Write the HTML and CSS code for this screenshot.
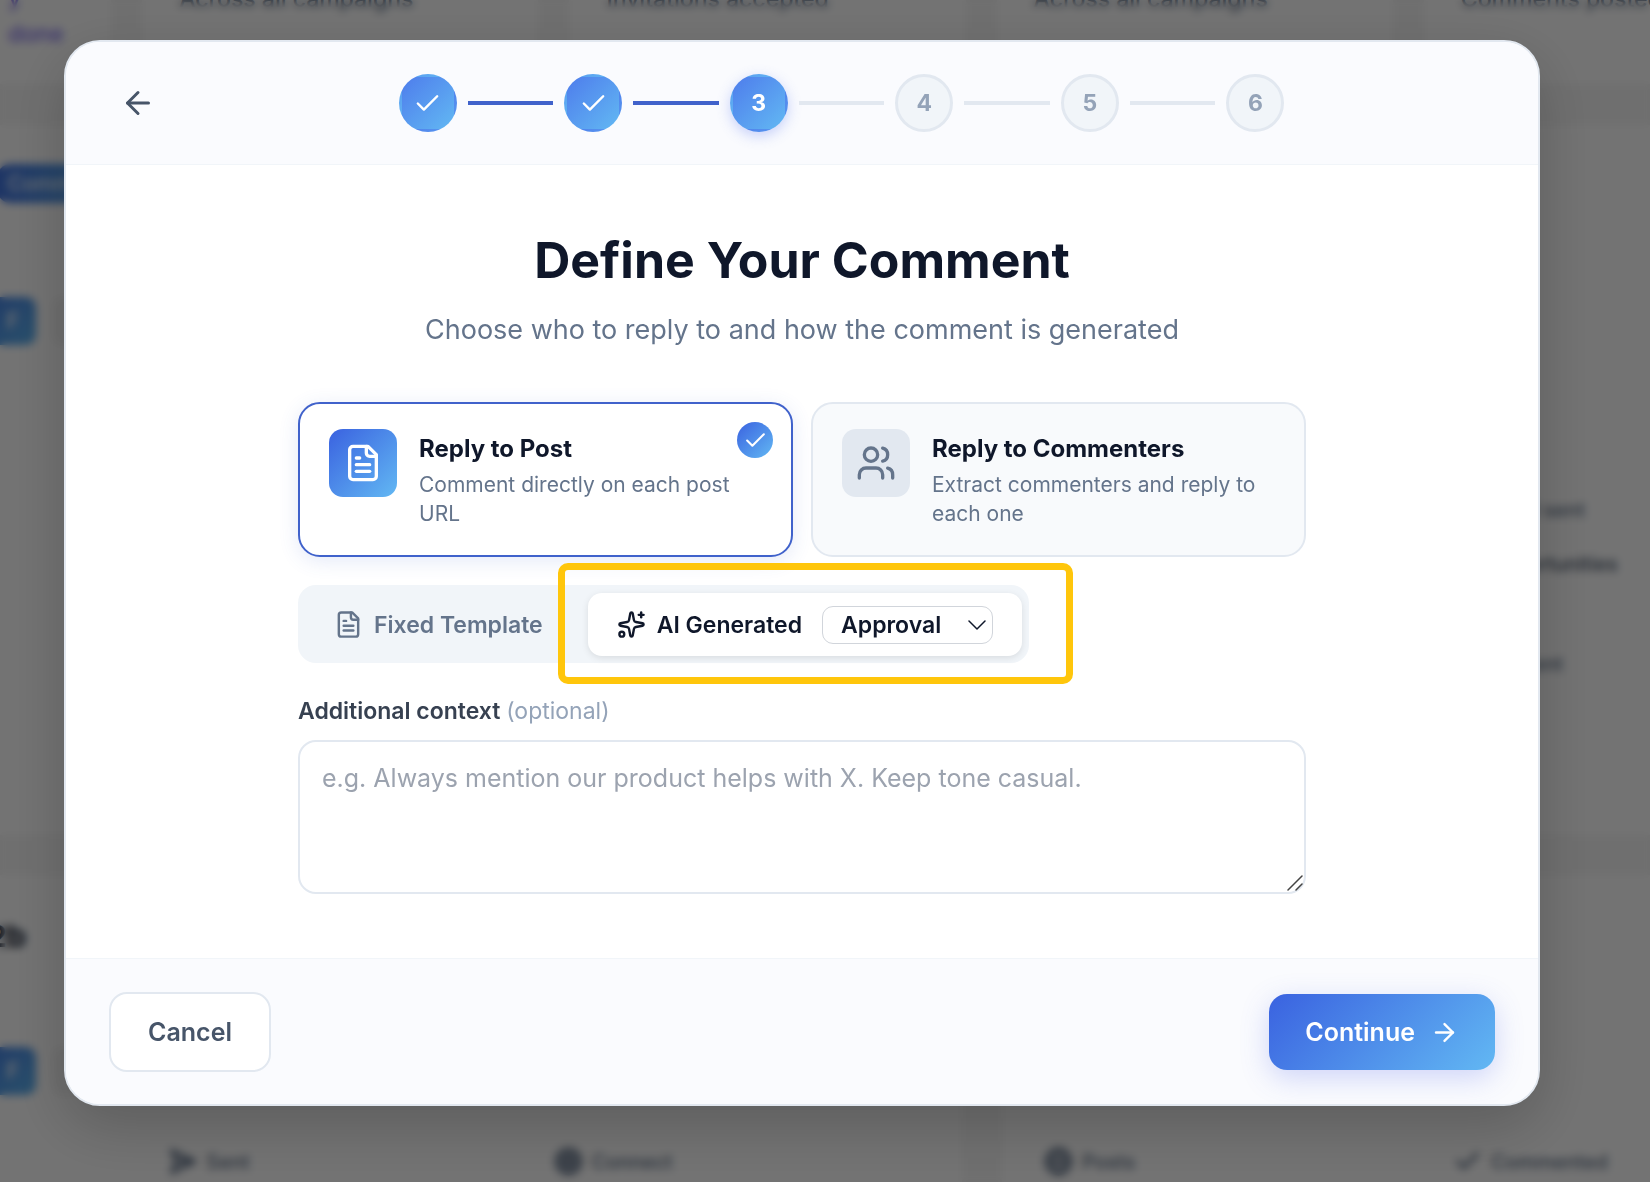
FILE: index.html
```html
<!DOCTYPE html>
<html lang="en">
<head>
    <meta charset="UTF-8">
    <meta name="viewport" content="width=device-width, initial-scale=1.0">
    <title>New Campaign - Define Your Comment</title>
    <link rel="stylesheet" href="styles.css">
</head>
<body>

<!-- Dashboard behind the dialog -->
<div class="dashboard" aria-hidden="true">
    <div class="stats">
        <div class="panel stat stat-done">y<br>done</div>
        <div class="panel stat">Across all campaigns</div>
        <div class="panel stat">Invitations accepted</div>
        <div class="panel stat">Across all campaigns</div>
        <div class="panel stat">Comments posted</div>
    </div>
    <div class="campaigns">
        <div class="panel campaign">
            <span class="pill">Comment</span>
            <div class="avatars"><span class="avatar">F</span><span class="avatar avatar-empty"></span></div>
        </div>
        <div class="panel activity">
            <p>Email sent</p>
            <p class="strong">Opportunities</p>
            <p class="last">Content</p>
        </div>
        <div class="panel campaign">
            <h2>2b</h2>
            <div class="avatars avatars-low"><span class="avatar">F</span><span class="avatar avatar-empty"></span></div>
            <div class="metrics metrics-left">
                <span class="metric"><svg class="icon-md" viewBox="0 0 24 24"><path d="M3 3l4 9-4 9 19-9zM7 12h15"/></svg>Sent</span>
                <span class="metric"><svg class="icon-md" viewBox="0 0 24 24"><circle cx="12" cy="12" r="10"/><circle cx="12" cy="12" r="6"/><circle cx="12" cy="12" r="2"/></svg>Connect</span>
            </div>
        </div>
        <div class="panel campaign">
            <div class="metrics metrics-right">
                <span class="metric"><svg class="icon-md" viewBox="0 0 24 24"><circle cx="12" cy="12" r="10"/><ellipse cx="12" cy="12" rx="4" ry="10"/><path d="M2 12h20"/></svg>Posts</span>
                <span class="metric"><svg class="icon-md" viewBox="0 0 24 24"><path d="M20 6 9 17l-5-5"/></svg>Commented</span>
            </div>
        </div>
    </div>
</div>

<div class="overlay">
    <div class="modal" role="dialog" aria-labelledby="modalTitle">

        <header class="modal-header">
            <button class="back-button" aria-label="Back">
                <svg class="icon-lg" viewBox="0 0 24 24"><path d="m12 19-7-7 7-7"/><path d="M19 12H5"/></svg>
            </button>
            <div class="steps-area">
                <div class="steps">
                    <span class="step done"><svg class="icon-md" viewBox="0 0 24 24"><path d="M20 6 9 17l-5-5"/></svg></span>
                    <span class="step-line done"></span>
                    <span class="step done"><svg class="icon-md" viewBox="0 0 24 24"><path d="M20 6 9 17l-5-5"/></svg></span>
                    <span class="step-line done"></span>
                    <span class="step done current">3</span>
                    <span class="step-line"></span>
                    <span class="step">4</span>
                    <span class="step-line"></span>
                    <span class="step">5</span>
                    <span class="step-line"></span>
                    <span class="step">6</span>
                </div>
            </div>
        </header>

        <main class="modal-body">
            <h1 id="modalTitle">Define Your Comment</h1>
            <p class="subtitle">Choose who to reply to and how the comment is generated</p>

            <div class="options">
                <button class="option selected">
                    <span class="option-icon">
                        <svg class="icon-xl" viewBox="0 0 24 24"><path d="M15 2H6a2 2 0 0 0-2 2v16a2 2 0 0 0 2 2h12a2 2 0 0 0 2-2V7Z"/><path d="M14 2v4a2 2 0 0 0 2 2h4"/><path d="M10 9H8"/><path d="M16 13H8"/><path d="M16 17H8"/></svg>
                    </span>
                    <span class="option-text">
                        <span class="option-title">Reply to Post</span>
                        <span class="option-desc">Comment directly on each post URL</span>
                    </span>
                    <span class="option-check">
                        <svg class="icon-sm" viewBox="0 0 24 24"><path d="M20 6 9 17l-5-5"/></svg>
                    </span>
                </button>
                <button class="option">
                    <span class="option-icon">
                        <svg class="icon-xl" viewBox="0 0 24 24"><path d="M16 21v-2a4 4 0 0 0-4-4H6a4 4 0 0 0-4 4v2"/><circle cx="9" cy="7" r="4"/><path d="M22 21v-2a4 4 0 0 0-3-3.87"/><path d="M16 3.13a4 4 0 0 1 0 7.75"/></svg>
                    </span>
                    <span class="option-text">
                        <span class="option-title">Reply to Commenters</span>
                        <span class="option-desc">Extract commenters and reply to each one</span>
                    </span>
                </button>
            </div>

            <div class="tabs">
                <button class="tab">
                    <svg class="icon-md" viewBox="0 0 24 24"><path d="M15 2H6a2 2 0 0 0-2 2v16a2 2 0 0 0 2 2h12a2 2 0 0 0 2-2V7Z"/><path d="M14 2v4a2 2 0 0 0 2 2h4"/><path d="M10 9H8"/><path d="M16 13H8"/><path d="M16 17H8"/></svg>
                    Fixed Template
                </button>
                <div class="tab-active">
                    <button class="tab">
                        <svg class="icon-md" viewBox="0 0 24 24"><path d="M11.017 2.814a1 1 0 0 1 1.966 0l1.051 5.558a2 2 0 0 0 1.594 1.594l5.558 1.051a1 1 0 0 1 0 1.966l-5.558 1.051a2 2 0 0 0-1.594 1.594l-1.051 5.558a1 1 0 0 1-1.966 0l-1.051-5.558a2 2 0 0 0-1.594-1.594l-5.558-1.051a1 1 0 0 1 0-1.966l5.558-1.051a2 2 0 0 0 1.594-1.594z"/><path d="M20 2v4"/><path d="M22 4h-4"/><circle cx="4" cy="20" r="2"/></svg>
                        AI Generated
                    </button>
                    <div class="mode">
                        <select aria-label="Generation mode">
                            <option>Approval</option>
                            <option>Auto</option>
                        </select>
                        <svg class="chevron" viewBox="0 0 18 10"><path d="M1 1l8 8 8-8"/></svg>
                    </div>
                </div>
                <div class="highlight"></div>
            </div>

            <label for="context">Additional context <span>(optional)</span></label>
            <div class="context-box">
                <textarea id="context" placeholder="e.g. Always mention our product helps with X. Keep tone casual."></textarea>
                <svg class="resizer" viewBox="0 0 16 16"><path d="M1 15 15 1M9 15l6-6"/></svg>
            </div>
        </main>

        <footer class="modal-footer">
            <button class="cancel-button">Cancel</button>
            <button class="continue-button">
                Continue
                <svg class="icon-md" viewBox="0 0 24 24"><path d="M5 12h14"/><path d="m12 5 7 7-7 7"/></svg>
            </button>
        </footer>
    </div>
</div>

</body>
</html>
```

FILE: styles.css
```css
* {
    box-sizing: border-box;
}
body {
    font-family: Inter, "Liberation Sans", sans-serif;
    background-color: #f7f7f7;
    color: #0f172a;
    margin: 0;
    height: 100vh;
    overflow: hidden;
}
h1, h2, p {
    margin: 0;
}
button, select, textarea {
    font-family: inherit;
    margin: 0;
}
button {
    background: none;
    border: none;
    padding: 0;
    cursor: pointer;
}
svg {
    fill: none;
    stroke: currentColor;
    stroke-width: 2;
    stroke-linecap: round;
    stroke-linejoin: round;
    flex-shrink: 0;
}
.icon-sm {
    width: 25px;
    height: 25px;
}
.icon-md {
    width: 29px;
    height: 29px;
}
.icon-lg {
    width: 36px;
    height: 36px;
}
.icon-xl {
    width: 40px;
    height: 40px;
}

/* Dashboard */
.dashboard {
    margin: -20px -170px 0 -285px;
    color: #64748b;
    font-size: 23px;
    font-weight: 500;
}
.stats {
    display: grid;
    grid-template-columns: repeat(5, 1fr);
    gap: 31px;
    margin-bottom: 41px;
}
.panel {
    background-color: white;
}
.stat {
    height: 104px;
    padding: 4px 37px;
    line-height: 30px;
}
.stat-done {
    color: #7c6cf0;
    padding: 0 0 0 293px;
    line-height: 36px;
}
.campaigns {
    display: grid;
    grid-template-columns: 1247fr 818fr;
    grid-template-rows: 710px 400px;
    gap: 40px;
}
.campaign {
    padding-left: 248px;
}
.pill {
    display: inline-block;
    margin: 39px 0 94px 34px;
    padding: 0 10px;
    border-radius: 14px;
    background: linear-gradient(90deg, #4274e0, #5eb4f0);
    color: #eff6ff;
    font-size: 21px;
    line-height: 39px;
}
.avatars {
    display: flex;
    gap: 16px;
}
.avatars-low {
    margin-top: 90px;
}
.avatar {
    width: 73px;
    height: 48px;
    padding-left: 43px;
    border-radius: 10px;
    background: linear-gradient(135deg, #4274e0, #5eb4f0);
    color: #eff6ff;
    line-height: 48px;
}
.avatar-empty {
    background: #f5f5f5;
}
.campaign h2 {
    padding: 40px 0 0 25px;
    color: #0f172a;
    font-size: 30px;
    line-height: 42px;
}
.activity {
    padding: 370px 0 0 485px;
    color: #64748b;
    font-size: 20px;
    line-height: 30px;
}
.activity .strong {
    margin-top: 24px;
    color: #475569;
}
.activity .last {
    margin-top: 70px;
}
.metrics {
    display: flex;
    gap: 304px;
    font-size: 20px;
}
.metrics-left {
    margin: 52px 0 0 205px;
}
.metrics-right {
    margin: 272px 0 0 -206px;
    gap: 318px;
}
.metric {
    display: flex;
    align-items: center;
    gap: 9px;
}
.metric svg {
    stroke-width: 3;
}

/* Modal */
.overlay {
    position: fixed;
    inset: 0;
    overflow: hidden;
    padding: 40px 110px 76px 64px;
    background-color: rgba(0, 0, 0, 0.55);
    backdrop-filter: blur(4px);
}
.modal {
    display: flex;
    flex-direction: column;
    background-color: white;
    border: 2px solid #e2e8f0;
    border-radius: 36px;
    box-shadow: 0 20px 60px rgba(0, 0, 0, 0.2);
    overflow: hidden;
}
.modal-header {
    display: flex;
    align-items: center;
    gap: 21px;
    padding: 32px 43px;
    background-color: #fafbfe;
    border-bottom: 1px solid #f1f5f9;
}
.back-button {
    display: flex;
    align-items: center;
    justify-content: center;
    width: 58px;
    height: 58px;
    color: #475569;
}
.steps-area {
    flex: 1;
}
.steps {
    display: flex;
    align-items: center;
    gap: 11px;
    max-width: 886px;
    margin: 0 auto;
}
.step {
    display: flex;
    align-items: center;
    justify-content: center;
    flex-shrink: 0;
    width: 58px;
    height: 58px;
    border: 3px solid #e2e8f0;
    border-radius: 50%;
    background-color: #f1f5f9;
    color: #94a3b8;
    font-size: 23px;
    font-weight: 700;
}
.step.done {
    border-color: transparent;
    background: linear-gradient(135deg, #4e7dec, #62b8f3);
    color: white;
}
.step.current {
    box-shadow: 0 4px 14px rgba(79, 110, 240, 0.3);
}
.step-line {
    flex: 1;
    height: 4px;
    background-color: #e2e8f0;
}
.step-line.done {
    background-color: #4062cb;
}
.modal-body {
    width: 100%;
    max-width: 1008px;
    margin: 0 auto;
    padding: 65px 0 64px;
}
h1 {
    text-align: center;
    font-size: 50px;
    line-height: 60px;
    font-weight: 700;
}
.subtitle {
    margin-top: 20px;
    text-align: center;
    color: #64748b;
    font-size: 27px;
    line-height: 40px;
}
.options {
    display: grid;
    grid-template-columns: 1fr 1fr;
    gap: 18px;
    margin-top: 52px;
}
.option {
    position: relative;
    display: flex;
    align-items: flex-start;
    gap: 22px;
    padding: 25px 29px;
    background-color: #f8fafc;
    border: 2px solid #e2e8f0;
    border-radius: 22px;
    color: #0f172a;
    text-align: left;
}
.option.selected {
    background-color: white;
    border-color: #4062cb;
    box-shadow: 0 4px 20px rgba(64, 98, 203, 0.14);
}
.option-icon {
    display: flex;
    align-items: center;
    justify-content: center;
    flex-shrink: 0;
    width: 68px;
    height: 68px;
    border-radius: 14px;
    background-color: #e2e8f0;
    color: #64748b;
}
.selected .option-icon {
    background: linear-gradient(135deg, #3a62e0, #62b8f3);
    color: white;
}
.option-title {
    display: block;
    margin: 4px 0 5px;
    font-size: 24px;
    line-height: 32px;
    font-weight: 700;
}
.option-desc {
    display: block;
    margin-bottom: 2px;
    max-width: 340px;
    color: #64748b;
    font-size: 21px;
    line-height: 29px;
}
.option-check {
    position: absolute;
    top: 18px;
    right: 18px;
    display: flex;
    align-items: center;
    justify-content: center;
    width: 36px;
    height: 36px;
    border-radius: 50%;
    background: linear-gradient(135deg, #3a62e0, #62b8f3);
    color: white;
}
.tabs {
    position: relative;
    display: flex;
    align-items: center;
    gap: 16px;
    width: fit-content;
    margin-top: 28px;
    padding: 8px 7px 7px 36px;
    background-color: #f1f5f9;
    border-radius: 18px;
}
.tab {
    display: flex;
    align-items: center;
    gap: 11px;
    padding-right: 29px;
    color: #64748b;
    font-size: 23px;
    line-height: 32px;
    font-weight: 600;
}
.tab-active {
    display: flex;
    align-items: center;
    gap: 20px;
    height: 63px;
    padding: 0 29px;
    background-color: white;
    border-radius: 14px;
    box-shadow: 0 2px 7px rgba(0, 0, 0, 0.1);
}
.tab-active .tab {
    padding-right: 0;
    color: #0f172a;
}
.mode {
    position: relative;
}
.mode select {
    display: block;
    appearance: none;
    width: 171px;
    height: 38px;
    padding: 0 18px;
    background-color: white;
    border: 1px solid #d1d5db;
    border-radius: 11px;
    color: #0f172a;
    font-size: 23px;
    font-weight: 600;
}
.chevron {
    position: absolute;
    top: 14px;
    right: 7px;
    width: 18px;
    height: 10px;
    stroke-width: 1.5;
    pointer-events: none;
}
.highlight {
    position: absolute;
    top: -22px;
    right: -44px;
    width: 515px;
    height: 121px;
    border: 7px solid #ffc60b;
    border-radius: 10px;
    pointer-events: none;
}
label {
    display: block;
    margin: 31px 0 12px;
    color: #374151;
    font-size: 23px;
    line-height: 34px;
    font-weight: 600;
}
label span {
    color: #94a3b8;
    font-weight: 400;
}
.context-box {
    position: relative;
}
textarea {
    display: block;
    width: 100%;
    height: 154px;
    padding: 18px 22px;
    border: 2px solid #e2e8f0;
    border-radius: 18px;
    color: #0f172a;
    font-size: 25px;
    line-height: 36px;
    resize: none;
}
textarea::placeholder {
    color: #9ca3af;
}
.resizer {
    position: absolute;
    right: 3px;
    bottom: 3px;
    width: 16px;
    height: 16px;
    color: #444;
    stroke-width: 1.5;
}
.modal-footer {
    display: flex;
    align-items: center;
    justify-content: space-between;
    padding: 33px 43px 32px;
    background-color: #fafbfe;
    border-top: 1px solid #f1f5f9;
}
.cancel-button {
    height: 80px;
    padding: 0 37px;
    background-color: white;
    border: 2px solid #e2e8f0;
    border-radius: 18px;
    color: #475569;
    font-size: 25px;
    font-weight: 600;
}
.continue-button {
    display: flex;
    align-items: center;
    gap: 15px;
    height: 76px;
    padding: 0 36px;
    background: linear-gradient(135deg, #3a62e0, #62b8f3);
    border-radius: 18px;
    box-shadow: 0 8px 28px rgba(79, 100, 230, 0.25);
    color: white;
    font-size: 25px;
    font-weight: 600;
}
```
